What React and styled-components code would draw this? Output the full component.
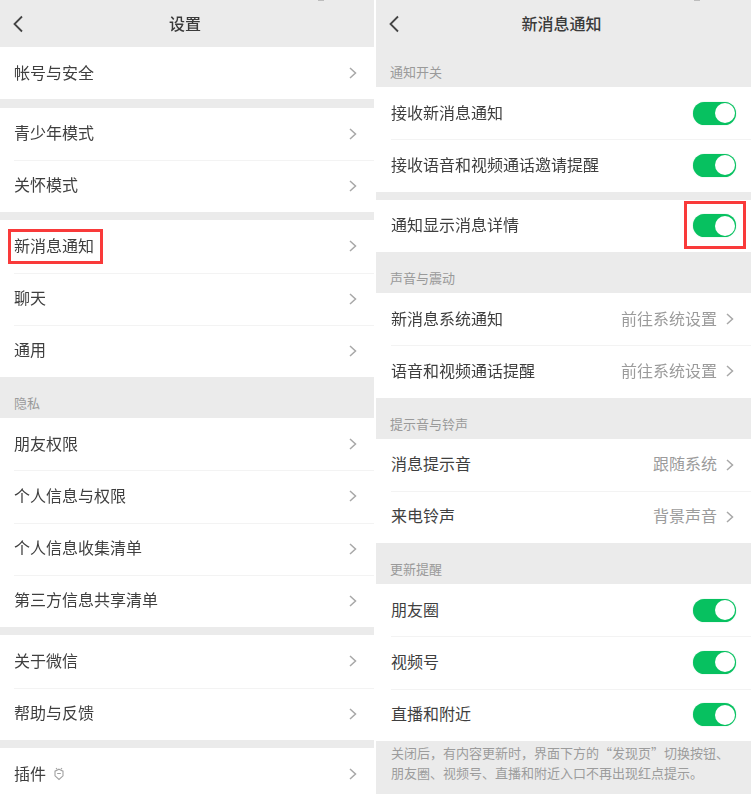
import React from 'react';
import styled, { createGlobalStyle } from 'styled-components';

const GlobalStyle = createGlobalStyle`
  html, body {
    margin: 0;
    padding: 0;
    background: #fff;
  }
  body {
    font-family: "Noto Sans CJK SC", "Noto Sans", sans-serif;
  }
`;

const Screen = styled.div`
  width: 753px;
  height: 794px;
  display: flex;
  gap: 2px;
  overflow: hidden;
  filter: blur(0.4px);
`;

const Panel = styled.div`
  width: ${(p) => p.$width}px;
  height: 794px;
  flex: none;
  background: #ebebeb;
  overflow: hidden;
`;

const NavBar = styled.div`
  position: relative;
  height: 47px;
  display: flex;
  align-items: center;
  justify-content: center;
`;

const BackButton = styled.svg`
  position: absolute;
  left: 12px;
  top: 15px;
  width: 12px;
  height: 18px;
  fill: none;
  stroke: #444;
  stroke-width: 1.8;
`;

const StatusMark = styled.span`
  position: absolute;
  left: 318px;
  top: 0;
  width: 6px;
  height: 1px;
  background: #bdbdbd;
`;

const NavTitle = styled.div`
  font-size: 16px;
  font-weight: 500;
  color: #3a3a3a;
  margin: -1px 4px 0 0;
`;

const SectionLabel = styled.div`
  height: ${(p) => p.$height || 41}px;
  box-sizing: border-box;
  padding: 0 14px 6px;
  display: flex;
  align-items: flex-end;
  font-size: 13px;
  line-height: 18px;
  color: #9a9a9a;
`;

const Group = styled.div`
  background: #fff;
`;

const Gap = styled.div`
  height: 8.25px;
`;

const Row = styled.div`
  position: relative;
  height: 52.25px;
  box-sizing: border-box;
  margin-left: ${(p) => p.$inset}px;
  padding-right: ${(p) => (p.$toggle ? 15 : 17)}px;
  display: flex;
  align-items: center;
  box-shadow: ${(p) => (p.$first ? 'none' : 'inset 0 1px 0 #f3f3f3')};
`;

const RowLabel = styled.span`
  flex: 1;
  display: flex;
  align-items: center;
  gap: 7px;
  padding-bottom: 3px;
  font-size: 16px;
  line-height: 22px;
  color: #3f3f3f;
`;

const RowValue = styled.span`
  margin-right: 9px;
  padding-bottom: 3px;
  font-size: 16px;
  line-height: 22px;
  color: #9b9b9b;
`;

const Chevron = styled.svg`
  width: 8px;
  height: 12px;
  fill: none;
  stroke: #a8a8a8;
  stroke-width: 1.5;
`;

const Plugin = styled.svg`
  width: 12px;
  height: 14px;
  margin-top: 3px;
  fill: none;
  stroke: #a0a0a0;
  stroke-width: 1.1;
`;

const Toggle = styled.span`
  width: 43px;
  height: 23px;
  box-sizing: border-box;
  padding: 1.5px;
  display: flex;
  justify-content: flex-end;
  border-radius: 12px;
  background: #07c160;
  box-shadow: 0 0 1px rgba(7, 193, 96, 0.6);
`;

const Knob = styled.span`
  width: 20px;
  height: 20px;
  border-radius: 50%;
  background: #fff;
`;

const Highlight = styled.span`
  position: absolute;
  box-sizing: border-box;
  border: 3px solid #f93a3a;
  pointer-events: none;
  ${(p) => p.$area};
`;

const Footnote = styled.div`
  padding: 2px 15px 0;
  font-size: 13px;
  line-height: 20px;
  color: #9c9c9c;
  white-space: nowrap;
`;

const textBox = 'left: -6px; top: 9px; width: 95px; height: 35px;';
const toggleBox = 'right: 5px; top: 1px; width: 62px; height: 48px;';

const settingsPage = [
  { rows: [{ label: '帐号与安全' }] },
  { gap: true, rows: [{ label: '青少年模式' }, { label: '关怀模式' }] },
  { gap: true, rows: [{ label: '新消息通知', box: textBox }, { label: '聊天' }, { label: '通用' }] },
  { title: '隐私', rows: [{ label: '朋友权限' }, { label: '个人信息与权限' }, { label: '个人信息收集清单' }, { label: '第三方信息共享清单' }] },
  { gap: true, rows: [{ label: '关于微信' }, { label: '帮助与反馈' }] },
  { gap: true, rows: [{ label: '插件', plugin: true }] },
];

const noticePage = [
  { title: '通知开关', titleHeight: 40, rows: [{ label: '接收新消息通知', on: true }, { label: '接收语音和视频通话邀请提醒', on: true }] },
  { gap: true, rows: [{ label: '通知显示消息详情', on: true, box: toggleBox }] },
  { title: '声音与震动', rows: [{ label: '新消息系统通知', value: '前往系统设置' }, { label: '语音和视频通话提醒', value: '前往系统设置' }] },
  { title: '提示音与铃声', rows: [{ label: '消息提示音', value: '跟随系统' }, { label: '来电铃声', value: '背景声音' }] },
  { title: '更新提醒', rows: [{ label: '朋友圈', on: true }, { label: '视频号', on: true }, { label: '直播和附近', on: true }] },
];

function SettingsRow({ row, first, inset }) {
  return (
    <Row $first={first} $inset={inset} $toggle={row.on}>
      <RowLabel>
        {row.label}
        {row.plugin && (
          <Plugin viewBox="0 0 12 14">
            <path d="M6 2.200 10 4.200v4.600L6 12.500 2 8.800V4.200z" />
            <path d="M4.200 6.500h3.600M3 1.200l1 1M9 1.200l-1 1" />
          </Plugin>
        )}
      </RowLabel>
      {row.value && <RowValue>{row.value}</RowValue>}
      {row.on ? (
        <Toggle>
          <Knob />
        </Toggle>
      ) : (
        <Chevron viewBox="0 0 8 12">
          <path d="M1 1l5.500 5L1 11" />
        </Chevron>
      )}
      {row.box && <Highlight $area={row.box} />}
    </Row>
  );
}

function Sections({ items, inset }) {
  return items.map((section, i) => (
    <React.Fragment key={i}>
      {section.gap && <Gap />}
      {section.title && <SectionLabel $height={section.titleHeight}>{section.title}</SectionLabel>}
      <Group>
        {section.rows.map((row, j) => (
          <SettingsRow key={row.label} row={row} first={j === 0} inset={inset} />
        ))}
      </Group>
    </React.Fragment>
  ));
}

function Nav({ title }) {
  return (
    <NavBar>
      <BackButton viewBox="0 0 12 18">
        <path d="M10 1.500 2.500 9l7.500 7.500" />
      </BackButton>
      <StatusMark />
      <NavTitle>{title}</NavTitle>
    </NavBar>
  );
}

export default function App() {
  return (
    <>
      <GlobalStyle />
      <Screen>
        <Panel $width={374}>
          <Nav title="设置" />
          <Sections items={settingsPage} inset={14} />
        </Panel>
        <Panel $width={375}>
          <Nav title="新消息通知" />
          <Sections items={noticePage} inset={15} />
          <Footnote>
            关闭后，有内容更新时，界面下方的“发现页”切换按钮、
            <br />
            朋友圈、视频号、直播和附近入口不再出现红点提示。
          </Footnote>
        </Panel>
      </Screen>
    </>
  );
}
